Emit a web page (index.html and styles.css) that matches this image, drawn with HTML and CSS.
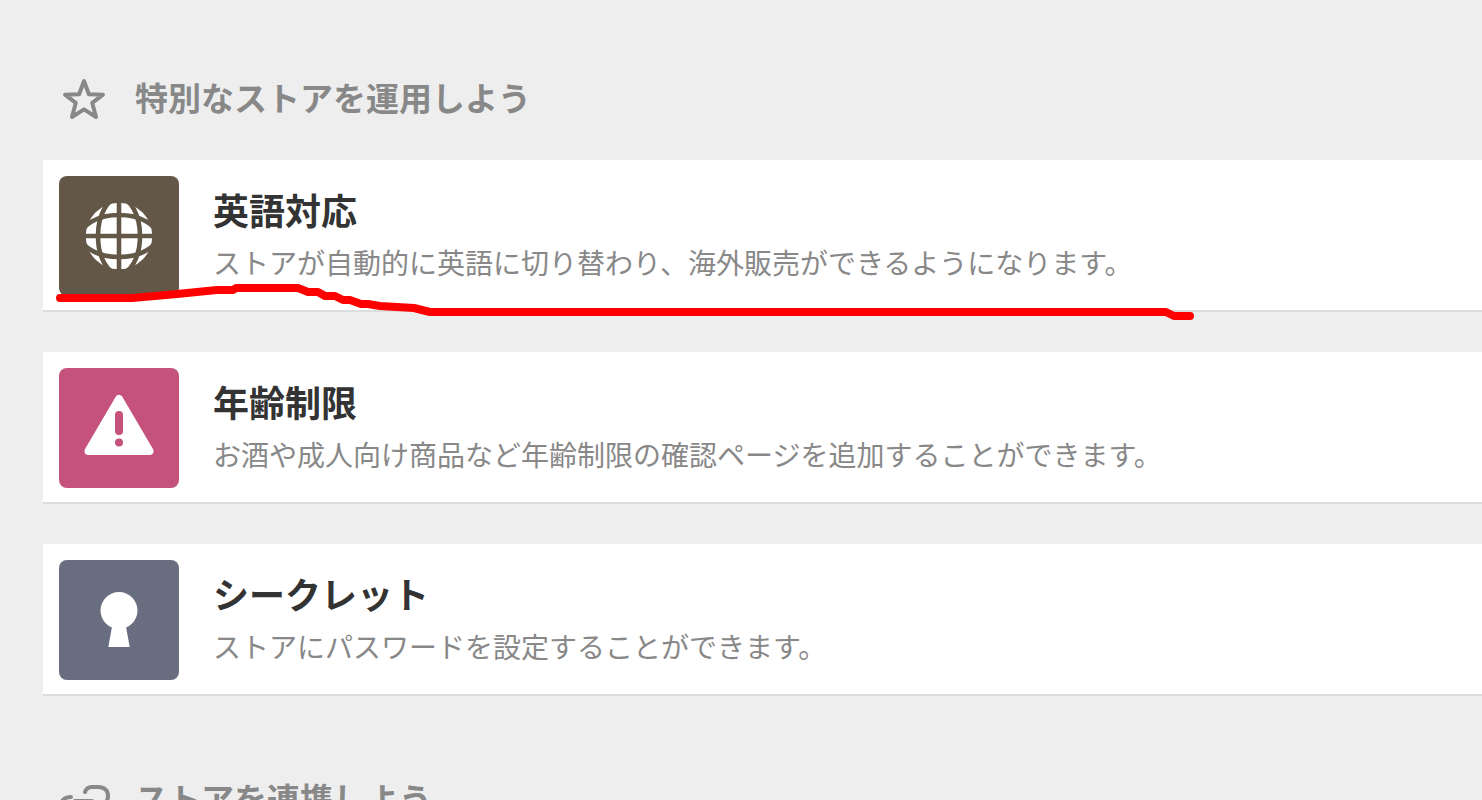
FILE: index.html
```html
<!DOCTYPE html>
<html lang="ja">
<head>
<meta charset="utf-8">
<title>ストア機能</title>
<link rel="stylesheet" href="styles.css">
</head>
<body>
<main class="page">
  <section class="group">
    <h2 class="group-title">
      <svg class="group-icon" viewBox="0 -2 50 50" aria-hidden="true"><path d="M25 7L29.9 20.2L44 20.7L33.2 28.8L37 43L25 35.4L13 43L16.8 28.8L6 20.7L20.1 20.2Z"/></svg>
      <span>特別なストアを運用しよう</span>
    </h2>
    <ul class="cards">
      <li class="card">
        <svg class="tile tile-globe" viewBox="0 0 120 120" aria-hidden="true">
          <circle cx="60" cy="60" r="33.3" fill="#fff"/>
          <g fill="none" stroke="#635748" stroke-width="4.6">
            <path d="M60 20V100M20 60H100"/>
            <ellipse cx="60" cy="60" rx="21" ry="38"/>
            <ellipse cx="60" cy="60" rx="38" ry="21"/>
          </g>
        </svg>
        <div class="card-text">
          <h3 class="card-title">英語対応</h3>
          <p class="card-desc">ストアが自動的に英語に切り替わり、海外販売ができるようになります。</p>
        </div>
        <svg class="marker" width="1200" height="60" viewBox="0 0 1200 60" aria-hidden="true"><path d="M17 28H89L134 24L174 20H190L193 18H255L265 22H275L282 26H292L300 30H307L318 34H325L337 36L371 38L387 42H1123L1131 46H1147"/></svg>
      </li>
      <li class="card">
        <svg class="tile tile-alert" viewBox="0 0 120 120" aria-hidden="true">
          <path d="M60 31L90.5 83H29.5Z" fill="#fff" stroke="#fff" stroke-width="8" stroke-linejoin="round"/>
          <path d="M60 47V63" stroke="#c4527c" stroke-width="8" stroke-linecap="round"/>
          <circle cx="60" cy="74.5" r="4" fill="#c4527c"/>
        </svg>
        <div class="card-text">
          <h3 class="card-title">年齢制限</h3>
          <p class="card-desc">お酒や成人向け商品など年齢制限の確認ページを追加することができます。</p>
        </div>
      </li>
      <li class="card">
        <svg class="tile tile-secret" viewBox="0 0 120 120" aria-hidden="true">
          <circle cx="60" cy="50.500" r="18.500" fill="#fff"/>
          <path d="M53.500 64H66.500L70.700 87H49.300Z" fill="#fff"/>
        </svg>
        <div class="card-text">
          <h3 class="card-title">シークレット</h3>
          <p class="card-desc">ストアにパスワードを設定することができます。</p>
        </div>
      </li>
    </ul>
  </section>
  <section class="group">
    <h2 class="group-title">
      <svg class="group-icon" viewBox="0 -3 50 50" aria-hidden="true"><path d="M26 16C27 13 29 11 33 11H39C45 11 49 14 49 20C49 26 45 29 39 29H33C29 29 27 28 26 26M12 21C6 21 2 24 2 30C2 36 6 39 12 39H18C22 39 24 37 25 34M16 25H33"/></svg>
      <span>ストアを連携しよう</span>
    </h2>
  </section>
</main>
</body>
</html>
```
FILE: styles.css
```css
* {
  box-sizing: border-box;
}

html {
  height: 100%;
  overflow: hidden;
}

body {
  height: 100%;
  margin: 0;
  overflow: hidden;
  background: #eee;
  color: #333;
  font-family: "Noto Sans CJK JP", sans-serif;
}

.page {
  padding: 73px 0 0 43px;
}

.group {
  margin-bottom: 78px;
}

.group-title {
  display: flex;
  align-items: center;
  gap: 26px;
  margin: 0 0 39px;
  padding-left: 16px;
  color: #888;
  font-size: 33px;
  font-weight: 700;
  line-height: 48px;
}

.group-icon {
  flex: none;
  width: 50px;
  height: 50px;
  margin: -1px 0;
  overflow: visible;
  fill: none;
  stroke: #888;
  stroke-width: 4;
  stroke-linecap: round;
  stroke-linejoin: round;
}

.cards {
  display: flex;
  flex-direction: column;
  gap: 40px;
  margin: 0;
  padding: 0;
  list-style: none;
}

.card {
  position: relative;
  display: flex;
  gap: 34px;
  padding: 16px 0 14px 16px;
  background: #fff;
  border-bottom: 2px solid #ddd;
}

.tile {
  flex: none;
  width: 120px;
  height: 120px;
  border-radius: 8px;
}

.tile-globe {
  background: #635748;
}

.tile-alert {
  background: #c4527c;
}

.tile-secret {
  background: #686e80;
}

.card-text {
  padding-top: 5px;
}

.card-title {
  margin: 0;
  font-size: 36px;
  font-weight: 700;
  line-height: 56px;
}

.card-desc {
  margin: 0;
  color: #888;
  font-size: 28px;
  line-height: 50px;
}

.marker {
  position: absolute;
  top: 110px;
  left: 0;
  z-index: 1;
  fill: none;
  stroke: #f00;
  stroke-width: 8;
  stroke-linecap: round;
  stroke-linejoin: round;
  pointer-events: none;
}
```
